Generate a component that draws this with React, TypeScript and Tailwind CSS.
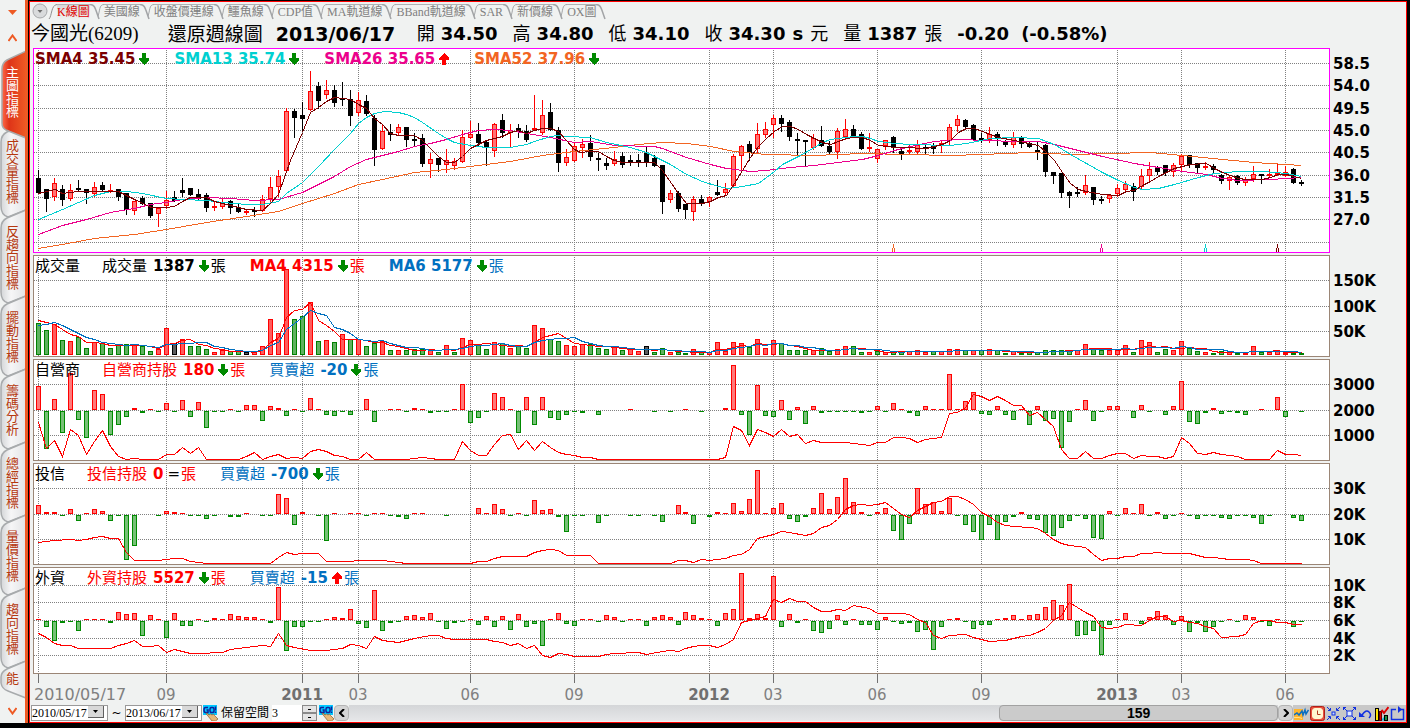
import { useState } from 'react'
import type { ReactNode } from 'react'
import clsx from 'clsx'

type Mark = 'up' | 'down' | 'flat'

const LAST = 158

const barX = (i: number) => 38 + 8 * i - (i > 80 ? 1 : 0)

const GRID_COLUMNS = [0, 16, 33, 40, 54, 67, 84, 92, 105, 118, 135, 143, 156]

const TABS = ['K線圖', '美國線', '收盤價連線', '鱷魚線', 'CDP值', 'MA軌道線', 'BBand軌道線', 'SAR', '新價線', 'OX圖']
const SIDE_TABS = ['主圖指標', '成交量指標', '反趨向指標', '擺動指標', '籌碼分析', '總經指標', '量價指標', '趨向指標']

// kind high top bottom low
const CANDLES = `
k170,178,193,193 k189,189,199,211 r178,183,197,200 k185,189,200,205 r184,190,199,200 k180,188,190,190 k189,189,193,203 r182,187,194,196
k182,185,190,190 r184,190,191,192 k189,189,197,200 k193,193,210,214 r201,201,211,214 k196,198,204,204 k203,203,216,217 r208,208,214,226
r191,200,206,208 k191,197,201,201 k178,190,193,196 k188,188,195,195 k189,194,199,199 k193,195,208,211 r202,206,208,210 r198,202,207,208
k200,201,208,213 k204,207,212,212 r209,211,212,214 k207,210,211,216 r195,199,211,211 r177,187,199,202 r170,176,187,196 r108,111,171,172
k109,111,118,137 k102,115,119,130 r71,91,110,110 k82,86,101,108 r80,90,95,98 k85,90,103,106 k82,98,99,105 k90,99,116,125
r92,100,113,115 k95,101,114,115 k115,118,150,165 r125,131,149,149 k124,132,135,140 r124,127,133,135 k127,127,140,146 k133,139,140,145
k134,138,164,166 r153,159,164,177 k158,158,165,171 r149,160,165,172 r158,161,166,169 r130,137,162,162 r121,134,138,138 k123,134,143,145
k140,142,147,165 r123,124,151,156 k114,120,133,137 r124,130,133,146 k124,128,132,137 k125,131,140,141 r95,128,129,130 r100,115,133,134
k103,112,130,130 k127,130,163,171 r149,157,163,165 r143,146,161,161 r139,144,148,157 k135,143,157,160 k153,158,159,170 k158,163,166,169
r151,159,164,165 k152,156,165,167 k155,160,163,165 k154,160,162,166 k147,153,163,166 k155,158,166,166 k165,165,202,213 r190,193,200,202
k191,193,209,211 k204,204,210,218 r196,199,212,220 k195,199,203,205 r196,197,202,206 k180,192,195,195 r183,189,193,195 r154,156,186,186
r145,146,156,170 k141,144,153,160 r123,134,149,153 r122,129,135,137 r115,118,125,137 k115,118,124,131 k120,122,137,140 k133,139,141,155
k140,140,142,165 r134,138,148,149 k126,140,146,146 k141,146,152,154 r128,131,152,158 r119,129,137,139 k125,129,137,137 k132,134,149,149
r133,147,149,151 r149,149,159,162 r140,140,146,149 k136,137,148,152 k147,151,154,159 r144,150,152,153 r140,145,152,154 k144,147,148,153
k143,146,149,153 r141,143,145,152 r124,127,141,145 r115,119,126,131 k119,120,127,128 k124,125,140,140 k133,138,140,142 r127,134,140,142
k132,134,139,145 k140,142,145,146 r132,137,145,147 k136,138,144,147 k142,143,147,147 k142,150,152,159 k144,145,172,176 k172,172,176,183
k173,173,193,197 k191,192,196,207 k187,192,193,196 r175,185,193,194 k187,187,200,204 k196,199,200,203 r195,195,199,202 r184,188,194,196
r181,184,190,192 k183,186,192,200 r169,176,187,189 r162,169,176,181 k166,167,172,174 k165,165,173,175 r163,165,172,176 r154,156,165,170
k155,155,165,167 k163,163,168,172 r162,166,167,169 k164,166,170,172 k174,175,181,183 r176,177,181,189 k175,176,183,184 r177,180,183,185
r166,174,179,181 k174,174,176,183 r169,174,176,177 r163,173,175,175 r166,172,176,176 k168,169,183,183 k180,182,184,185`
  .trim()
  .split(/\s+/)
  .map((c) => ({ kind: c[0], y: c.slice(1).split(',').map(Number) }))

const AVERAGES = [
  {
    color: '#f26522',
    points:
      '38,248 62,244 94,238 134,234 166,229 206,222 246,216 278,211 302,203 334,193 358,184 382,179 414,172 446,169 478,165 510,161 542,155 574,151 614,147 638,144 662,142 686,143 710,146 734,151 766,154 814,155 862,153 950,155 982,154 1030,152 1070,154 1110,153 1150,152 1182,155 1222,159 1254,162 1301,165',
  },
  {
    color: '#ec008c',
    points:
      '38,234 62,225 86,219 110,212 134,208 150,204 166,202 182,199 206,197 230,198 254,200 278,199 302,192 318,184 334,176 350,166 366,159 382,155 398,151 414,146 430,143 446,139 462,134 478,130 494,129 510,130 526,133 550,137 574,142 590,141 614,145 654,146 662,148 686,157 710,164 726,168 750,171 766,170 790,167 814,165 838,162 862,159 878,155 894,150 910,146 934,141 958,139 1014,141 1038,141 1054,144 1078,150 1102,156 1134,163 1158,167 1182,171 1206,174 1222,178 1238,180 1270,179 1286,178 1301,177',
  },
  {
    color: '#00d0d0',
    points:
      '38,219 62,209 78,202 94,195 110,191 126,191 142,193 166,198 182,199 206,200 222,202 246,204 262,204 278,201 286,193 302,182 318,166 334,149 350,133 358,123 366,117 374,113 384,111 398,112 406,114 414,117 422,122 438,133 446,138 454,142 470,145 486,147 510,147 526,144 534,141 550,136 558,135 566,136 590,137 606,142 630,147 646,152 662,160 670,164 686,174 702,181 718,186 728,188 742,186 758,183 766,177 774,171 782,164 798,156 814,147 822,142 830,139 854,136 862,136 870,138 878,141 894,143 910,144 950,145 966,143 990,138 1014,137 1038,138 1054,144 1070,154 1086,163 1102,172 1118,180 1134,187 1142,189 1158,188 1174,184 1198,177 1214,173 1238,171 1262,171 1286,173 1301,176',
  },
  {
    color: '#7b0000',
    points:
      '38,193 55,189 62,193 78,191 94,191 118,191 134,199 151,207 166,207 174,206 182,201 190,197 206,197 214,201 230,205 246,209 262,210 270,203 278,194 290,160 302,132 310,112 318,107 326,101 334,97 342,98 350,99 358,104 366,108 374,118 382,124 390,133 398,135 414,135 422,140 430,148 438,156 446,162 454,162 462,156 470,148 478,144 486,140 502,136 510,132 518,130 526,133 534,130 542,128 550,128 558,131 566,140 574,149 580,152 590,151 598,151 606,156 614,160 622,162 654,162 662,170 678,193 686,203 702,203 710,201 718,197 726,195 734,183 742,170 750,157 758,146 766,138 774,131 782,126 790,126 798,129 806,134 814,138 822,142 830,144 838,141 846,138 854,137 862,137 870,140 878,145 886,146 894,147 902,147 926,148 942,144 950,140 958,132 966,128 974,128 982,131 990,134 998,137 1014,140 1038,145 1046,152 1054,160 1062,172 1070,183 1078,189 1086,191 1102,194 1118,195 1126,191 1134,190 1142,185 1150,181 1158,176 1166,172 1174,168 1182,166 1190,164 1206,163 1214,168 1222,172 1230,175 1238,178 1246,179 1262,179 1270,177 1278,174 1286,174 1294,176 1301,178',
  },
]

const SIGNALS: [number, string][] = [
  [107, '#f26522'],
  [133, '#ec008c'],
  [146, '#00d0d0'],
  [155, '#7b0000'],
]

const VOLUME = `
g31 g24 r30 g14 r13 g17 g6 r12 g11 g6 g9 g10 r10 g8 g3 r5 r26 k11 r15 g8 g8 g5 r2 r4 g3 g3 k2 r2 r8 r35 r21 r85 g35 g38 r52 g13 r14 g12 r20 g15
r15 g8 g11 r13 g4 r4 g4 g5 g5 r5 g2 r9 g2 r16 r14 g9 g5 r12 g11 r6 g8 g6 r29 r26 g15 g13 r9 r8 r10 g10 g6 g5 r8 g4 r5 r3 k8 g2 g6 r2
g2 g1 r5 g2 r2 r12 r3 r12 r11 g7 r15 r6 r14 g11 g4 g4 g4 r4 g6 g3 r5 r8 g8 g2 r2 g3 r2 g3 g3 r3 r4 r2 g3 r3 r5 r5 g4 r4 g4 r5
g4 g1 r3 g1 g2 g2 g4 g4 g4 g4 r4 r10 g6 g4 r4 r4 r9 g2 r14 r12 g2 g5 r4 r13 g6 g3 r2 g1 g3 r2 g1 r1 r8 g2 r2 r4 r1 g1 g1`
  .trim()
  .split(/\s+/)
  .map((v) => ({ kind: v[0], size: Number(v.slice(1)) }))

function movingAverage(span: number) {
  const sizes = [19, 19, 30, 38, 37, ...VOLUME.map((v) => v.size)]
  return VOLUME.map((_, i) => {
    const slice = sizes.slice(i + 6 - span, i + 6)
    const mean = slice.reduce((sum, n) => sum + n, 0) / span
    return `${barX(i)},${Math.round(99 - mean)}`
  }).join(' ')
}

const DEALER_BARS = [
  24, -38, 11, -22, 37, -9, -27, 20, 16, -24, -14, -6, 2, -2, 1, -1, 7, -1, 10, -6, 8, -17, -1, -1, 1, -1, 5, 5, -10, 4, 2, -5, 1, -1, 12, 1, -4, -5, -1, -4,
  0, 11, -11, 0, 1, 1, -1, 2, 1, -2, -1, -1, 1, 26, -12, -7, -1, 17, 13, 1, -22, 13, -14, 13, -7, -9, -4, -1, -2, 0, -4, 0, 0, 0, 1, 0, 0, -1, 0, -1,
  0, 1, 0, -1, 0, 0, 2, 45, -4, -24, 25, -5, -6, 10, -9, 3, -13, 4, -2, -1, -1, -1, -1, -2, -1, 4, -1, 7, 1, -2, -5, 4, 1, 1, 36, 1, 9, 18, -3, -4,
  4, -4, -9, 1, -14, 4, -10, -8, -37, -11, 1, 10, -10, -1, 4, 4, 0, -7, 5, -1, 0, -4, 4, 29, -11, -13, -2, 2, -3, -1, -2, -4, 0, 1, 0, 13, -6, 0, -1,
]

const TRUST_BARS = [
  9, 2, 2, -1, 5, -6, 1, 5, 3, -6, -1, -45, -31, 0, 0, -1, 3, 2, 1, -1, -1, -4, -1, 0, -2, -2, 1, 0, -1, -1, 20, 16, -10, 2, 0, -1, -26, 1, 0, 1,
  1, -1, 1, 1, -1, -2, -4, 1, 1, 0, 0, -1, 0, 0, 0, 6, 1, 10, 5, -1, 1, -1, 14, 4, 5, -2, -17, -1, -1, 0, -8, -1, 0, 0, -1, -1, 0, -1, -7, 0,
  9, 2, -9, 0, -2, 2, 1, 11, 3, 15, 44, 1, 6, 11, -4, -7, -2, 6, 21, 5, 17, 36, 12, 2, -1, 2, 6, -16, -25, -9, 26, 10, 12, 3, 16, -1, -10, -17, -25, -10,
  -25, -7, -2, 2, -4, -5, -18, -21, -13, -6, -1, -4, -23, -24, 3, -1, 6, 1, 10, -1, 2, -4, -1, 1, -1, -4, -1, -1, -3, -4, -1, -1, -3, -9, -1, 0, 0, -3, -6,
]

const FOREIGN_BARS = [
  1, -6, -20, -2, -1, -10, 1, 1, 1, -2, 8, 6, 7, -15, 5, 1, -17, 7, -5, -5, 1, -1, 2, 1, 6, 4, 3, 3, 1, -2, 33, -30, -6, -6, -1, -1, 1, 3, 2, 11,
  -3, -7, 30, -10, -2, -1, 4, 5, 3, 7, -1, -8, -2, -1, 1, -4, 4, -6, 4, -9, 6, -6, -3, -25, 1, 7, -3, -5, 1, 1, -1, 5, 3, -1, 1, 1, -5, 3, 5, 3,
  -4, 8, 5, 2, 1, -5, 7, 11, 47, 2, 6, 2, 44, -6, 6, -2, 1, -10, -12, -8, 5, -4, 1, -4, -4, -9, 3, -1, -3, -2, -11, -9, -29, -6, 1, 2, -1, -8, -4, -4,
  1, 2, 5, 1, 5, 6, 13, 20, 15, 36, -15, -14, -10, -34, -4, 1, 7, 0, -3, 3, 9, 5, -4, 4, -11, -2, -11, -6, -1, 1, -1, 5, 3, -1, -5, 1, 0, -6, -1,
]

// bar index : y
const DEALER_LINE =
  '0:63 1:89 2:81 3:97 4:70 5:76 6:95 7:82 8:71 9:87 10:97 11:100 12:99 13:100 15:100 16:95 17:95 18:88 19:94 20:88 21:100 25:100 26:97 27:93 28:100 29:97 30:95 31:99 32:98 33:99 34:92 35:90 36:92 37:96 38:97 39:100 40:100 41:93 42:100 46:100 48:98 50:100 52:100 53:82 54:91 55:96 56:96 57:85 58:76 59:75 60:90 61:81 62:91 63:82 64:88 65:93 66:95 67:96 68:98 69:98 70:100 85:100 86:98 87:67 88:71 89:86 90:70 91:73 92:77 93:70 94:77 95:75 96:84 97:81 98:83 101:83 104:86 105:83 106:83 107:78 108:78 109:79 110:83 111:80 113:78 114:54 115:53 116:48 117:35 118:37 119:41 120:37 121:41 122:46 123:46 124:56 125:53 126:60 127:67 128:90 129:99 130:99 131:92 132:99 133:99 134:96 135:94 136:94 137:99 138:96 139:97 140:97 141:99 142:97 143:78 144:84 145:94 146:95 147:93 148:95 150:97 151:100 154:100 155:91 156:95 157:95 158:96'
const TRUST_LINE =
  '0:79 1:78 2:77 4:76 5:77 6:76 7:74 8:73 9:75 10:75 11:89 12:97 15:97 17:95 18:95 19:98 20:99 21:100 29:100 30:94 31:89 32:91 33:90 35:90 36:98 39:98 40:97 43:97 44:98 46:100 54:100 55:98 56:98 57:95 58:93 61:93 62:89 63:87 64:86 65:87 66:92 69:92 70:100 79:100 80:97 81:97 82:99 83:96 84:97 85:96 86:95 87:92 88:91 89:86 90:75 91:73 92:71 93:68 94:69 96:72 97:70 98:64 99:62 100:56 101:46 102:42 103:41 104:42 105:41 106:39 107:45 108:51 109:54 110:47 111:43 112:39 113:38 114:33 115:33 116:36 117:41 118:49 119:53 120:59 121:62 122:63 124:64 125:65 126:70 127:76 128:80 129:82 130:83 131:84 132:91 133:97 134:95 135:95 136:93 137:93 138:90 139:90 140:89 141:90 144:90 145:92 146:94 147:94 149:96 151:96 152:97 153:100 158:100'
const FOREIGN_LINE =
  '0:66 1:70 2:76 3:78 4:78 5:81 9:81 10:78 11:76 12:73 13:79 14:79 15:78 16:85 17:82 18:84 19:86 21:86 22:85 23:85 24:82 26:80 28:78 29:79 30:66 31:78 32:80 34:83 36:83 37:82 38:81 39:77 40:78 41:81 42:69 43:73 45:75 46:73 47:71 49:68 50:68 51:71 52:72 56:72 57:74 58:75 59:78 60:76 61:81 62:78 63:88 64:90 65:86 66:87 67:89 70:89 71:87 72:86 75:85 76:87 78:84 79:83 80:84 81:81 82:79 83:78 84:78 85:80 86:77 87:72 88:55 89:53 91:49 92:32 93:35 94:31 95:34 96:34 97:40 98:44 99:44 100:42 101:43 102:38 104:41 105:46 108:46 109:47 110:52 111:55 112:68 113:71 114:68 116:67 117:70 119:74 121:73 123:69 124:68 125:65 126:61 127:53 128:48 129:35 130:40 131:45 132:49 133:60 134:61 135:60 136:57 138:58 139:53 140:49 141:49 142:54 143:53 144:55 145:56 146:59 147:61 148:70 150:69 151:67 152:56 153:53 154:53 155:55 156:55 157:57 158:57'

const toPoints = (line: string) =>
  line
    .split(' ')
    .map((p) => p.split(':').map(Number))
    .map(([i, y]) => `${barX(i)},${y}`)
    .join(' ')

const TIME_LABELS: { i: number; text: string; bold?: boolean }[] = [
  { i: 16, text: '09' },
  { i: 33, text: '2011', bold: true },
  { i: 40, text: '03' },
  { i: 54, text: '06' },
  { i: 67, text: '09' },
  { i: 84, text: '2012', bold: true },
  { i: 92, text: '03' },
  { i: 105, text: '06' },
  { i: 118, text: '09' },
  { i: 135, text: '2013', bold: true },
  { i: 143, text: '03' },
  { i: 156, text: '06' },
]

function Arrow({ mark }: { mark: Mark }) {
  if (mark === 'flat') return <span className="ml-1 text-black">=</span>
  return (
    <svg className="ml-[3px]" width="12" height="12" viewBox="-1 0 12 12" shapeRendering="crispEdges">
      {mark === 'down' ? (
        <path d="M3 0h4v5h3v2l-5 5l-5 -5v-2h3z" fill="#008a00" />
      ) : (
        <path d="M3 12h4v-5h3v-2l-5 -5l-5 5v2h3z" fill="#ff0000" />
      )}
    </svg>
  )
}

interface LegendProps {
  name: string
  value?: string
  mark?: Mark
  unit?: string
  color: string
  bold?: boolean
}

function Legend({ name, value, mark, unit, color, bold }: LegendProps) {
  return (
    <span className={clsx('flex items-center', color)}>
      <span className={clsx(bold && 'font-bold')}>{name}</span>
      {value && <span className="ml-1.5 font-bold">{value}</span>}
      {mark && <Arrow mark={mark} />}
      {unit && <span className="ml-px">{unit}</span>}
    </span>
  )
}

interface PanelProps {
  top?: number
  height: number
  rows: number[]
  labels: [number, string][]
  title?: string
  legend: ReactNode
  children: ReactNode
  main?: boolean
}

function Panel({ top = 0, height, rows, labels, title, legend, children, main }: PanelProps) {
  return (
    <section className="flex">
      <div className={clsx('relative min-w-0 grow border bg-white', main ? 'border-[#ff00ff]' : 'border-[#9b8676]')}>
        <svg
          className="block w-full"
          height={height - 2}
          viewBox={`34 ${top + 1} 1295 ${height - 2}`}
          preserveAspectRatio="none"
          shapeRendering="crispEdges"
        >
          <g stroke="#808080" strokeDasharray="1 1">
            {rows.map((y) => (
              <line key={y} x1="34" x2="1329" y1={y + 0.5} y2={y + 0.5} />
            ))}
            {GRID_COLUMNS.map((i) => (
              <line key={i} x1={barX(i) + 0.5} x2={barX(i) + 0.5} y1={top} y2={top + height} />
            ))}
          </g>
          {children}
        </svg>
        <div className="absolute top-0 left-px flex h-5 items-center gap-6 text-[15px] leading-5 whitespace-nowrap">
          {title && <h2 className="-mr-0.5 text-black">{title}</h2>}
          {legend}
        </div>
      </div>
      <svg className="block w-[76px] shrink-0 overflow-visible" height={height} shapeRendering="auto">
        {labels.map(([y, text]) => (
          <text key={text} x="3" y={y - top + 6} className="fill-black text-[15px] font-bold">
            {text}
          </text>
        ))}
      </svg>
    </section>
  )
}

function Line({ points, color }: { points: string; color: string }) {
  return <polyline points={points} fill="none" stroke={color} strokeWidth="1" transform="translate(.5 .5)" />
}

function PricePlot() {
  return (
    <>
      {CANDLES.map(({ kind, y: [high, top, bottom, low] }, i) => {
        const x = barX(i)
        const red = kind === 'r'
        return (
          <g key={i} stroke={red ? '#ff0000' : '#000'} fill={red ? '#ff7474' : '#000'}>
            <line x1={x + 0.5} x2={x + 0.5} y1={high} y2={low + 1} />
            <rect x={x - 1.5} y={top + 0.5} width="4" height={Math.max(bottom - top - 1, 0.5)} />
          </g>
        )
      })}
      {AVERAGES.map((a) => (
        <Line key={a.color} points={a.points} color={a.color} />
      ))}
      {SIGNALS.map(([i, color]) => (
        <path key={i} d={`M${barX(i) + 0.5} 244v4M${barX(i) - 0.5} 248v4M${barX(i) + 1.5} 248v4`} stroke={color} />
      ))}
    </>
  )
}

const VOLUME_COLORS: Record<string, [string, string]> = {
  r: ['#ff5c5c', '#ff0000'],
  g: ['#5fb25f', '#008000'],
  k: ['#5c5c5c', '#000000'],
}

function VolumePlot() {
  return (
    <>
      {VOLUME.map(({ kind, size }, i) => (
        <rect
          key={i}
          x={barX(i) - 1.5}
          y={99.5 - size}
          width="4"
          height={size}
          fill={VOLUME_COLORS[kind][0]}
          stroke={VOLUME_COLORS[kind][1]}
        />
      ))}
      <Line points={movingAverage(4)} color="#ff0000" />
      <Line points={movingAverage(6)} color="#0070c0" />
    </>
  )
}

function FlowPlot({ bars, line, zero }: { bars: number[]; line: string; zero: number }) {
  return (
    <>
      {bars.slice(0, LAST + 1).map((size, i) => {
        if (size === 0) return null
        const up = size > 0
        const length = Math.abs(size)
        return (
          <rect
            key={i}
            x={barX(i) - 1.5}
            y={up ? zero - length + 0.5 : zero + 1.5}
            width="4"
            height={Math.max(length - 1, 0.1)}
            fill={up ? '#ff7a7a' : '#77c077'}
            stroke={up ? '#ff0000' : '#008a00'}
          />
        )
      })}
      <Line points={toPoints(line)} color="#ff0000" />
    </>
  )
}

function TimeAxis() {
  const percent = (px: number) => `${((px - 33) / 1297) * 100}%`
  return (
    <div className="pr-[76px]">
      <svg className="block h-[31px] w-full overflow-visible">
        <g stroke="#707070" shapeRendering="crispEdges">
          {GRID_COLUMNS.map((i) => (
            <line key={i} x1={percent(barX(i) + 0.5)} x2={percent(barX(i) + 0.5)} y1="0" y2="9" />
          ))}
        </g>
        <text x="1" y="26" className="fill-[#808080] text-base">
          2010/05/17
        </text>
        {TIME_LABELS.map(({ i, text, bold }) => (
          <text
            key={i}
            x={percent(barX(i))}
            y="26"
            textAnchor="middle"
            className={bold ? 'fill-[#707070] text-[15px] font-bold' : 'fill-[#808080] text-[15px]'}
          >
            {text}
          </text>
        ))}
      </svg>
    </div>
  )
}

function SideTab({ text, active, onClick }: { text: string; active: boolean; onClick: () => void }) {
  const h = 21 + text.length * 13
  return (
    <button
      type="button"
      onClick={onClick}
      className={clsx('relative grid w-full', active ? 'z-10 text-white' : 'text-[#b5380f]')}
    >
      <svg className="col-start-1 row-start-1 block overflow-visible" width="25" height={h} viewBox={`0 0 25 ${h}`}>
        {active ? (
          <path d={`M26 0L7 9Q2 12 2 18V${h - 1}Q2 ${h + 4} 6 ${h + 6}L26 ${h + 14}Z`} fill="url(#side-on)" stroke="#a9a9a9" strokeWidth="1.5" />
        ) : (
          <path d={`M26 0L7 8Q1 11 1 18V${h - 4}Q1 ${h + 5} 8 ${h + 7}L26 ${h}Z`} fill="url(#side-off)" stroke="#a8abad" strokeWidth="1.5" />
        )}
      </svg>
      <span className="col-start-1 row-start-1 mt-[15px] ml-1.5 w-[13px] text-[13px] leading-[13px] break-all">{text}</span>
    </button>
  )
}

function Sidebar() {
  const [active, setActive] = useState(0)
  return (
    <aside className="flex w-7 shrink-0 flex-col overflow-hidden border-r-[3px] border-[#ee5a24] bg-[#f0f2f1]">
      <svg width="0" height="0" className="block">
        <defs>
          <linearGradient id="side-on">
            <stop offset="0" stopColor="#ff6a4a" />
            <stop offset=".3" stopColor="#de3418" />
            <stop offset="1" stopColor="#ee5a24" />
          </linearGradient>
          <linearGradient id="side-off">
            <stop offset="0" stopColor="#d4d6d8" />
            <stop offset=".4" stopColor="#f6f6f7" />
            <stop offset="1" stopColor="#e2e3e5" />
          </linearGradient>
        </defs>
      </svg>
      <button type="button" aria-label="下捲" className="flex h-[25px] items-center justify-center">
        <svg width="9" height="5" viewBox="0 0 9 5">
          <path d="M0 0h9L4.500 5z" fill="#ee5a24" />
        </svg>
      </button>
      <button type="button" aria-label="上一頁" className="flex h-[26px] items-center justify-center">
        <svg width="9" height="8" viewBox="0 0 9 8" fill="none" stroke="#ee5a24" strokeWidth="2">
          <path d="M.5 7L4.500 1.500L8.500 7" />
        </svg>
      </button>
      {SIDE_TABS.map((text, i) => (
        <SideTab key={text} text={text} active={i === active} onClick={() => setActive(i)} />
      ))}
      <button type="button" className="relative grid w-full text-[#b5380f]">
        <svg className="col-start-1 row-start-1 block" width="25" height="38" viewBox="0 0 25 38">
          <path d="M26 0L7 8Q1 11 1 16V22Q2 28 8 30L26 37Z" fill="url(#side-off)" stroke="#a8abad" strokeWidth="1.5" />
        </svg>
        <span className="col-start-1 row-start-1 mt-2 ml-1.5 w-[13px] text-[13px] leading-5">能</span>
      </button>
      <button type="button" aria-label="下一頁" className="flex h-6 items-center justify-center">
        <svg width="9" height="8" viewBox="0 0 9 8" fill="none" stroke="#ee5a24" strokeWidth="2">
          <path d="M.5 1L4.500 6.500L8.500 1" />
        </svg>
      </button>
    </aside>
  )
}

function ChartTabs() {
  const [active, setActive] = useState(0)
  return (
    <nav className="flex h-[18px] items-start pl-0.5 font-['Liberation_Serif','Noto_Sans_CJK_TC',serif] text-xs">
      <button type="button" aria-label="選單" className="mt-px">
        <svg width="16" height="16" viewBox="0 0 16 16">
          <circle cx="8" cy="8" r="7" fill="#d9dbdc" stroke="#a6a8aa" />
          <path d="M5.500 7h5L8 10z" fill="#6f6f6f" />
        </svg>
      </button>
      <svg className="mt-0.5 block" width="9" height="16" viewBox="0 0 9 16" fill="none" stroke="#8e8e8e">
        <path d="M1 15C4 12 3 1 9 .5" />
      </svg>
      {TABS.map((tab, i) => (
        <button key={tab} type="button" onClick={() => setActive(i)} className="mt-0.5 flex items-start">
          <span
            className={clsx(
              'h-4 border-t border-[#b0b2b4] leading-[15px] whitespace-nowrap',
              i === active ? 'bg-gradient-to-b from-[#d8d8d8] to-[#f0f2f1] text-[#e00000]' : 'text-[#808080]',
            )}
          >
            {tab}
          </span>
          <svg className="block" width="14" height="16" viewBox="0 0 14 16" fill="none" stroke="#a2a4a6">
            <path d="M0 .5C5 .5 5 4 9 15" strokeWidth="1.5" />
            {i < TABS.length - 1 && <path d="M8 12C10 7 9 .5 14 .5" />}
          </svg>
        </button>
      ))}
    </nav>
  )
}

function Quote({ label, value }: { label: string; value: string }) {
  return (
    <span className="flex items-center gap-1.5">
      <span>{label}</span>
      <b>{value}</b>
    </span>
  )
}

function Header() {
  return (
    <header className="flex h-7 items-center gap-[15px] pl-px text-[18px] leading-7 whitespace-nowrap text-black">
      <h1 className="mr-3.5 font-['Liberation_Serif','Noto_Sans_CJK_TC',serif] text-[19px]">今國光(6209)</h1>
      <span className="-mr-0.5 text-[19px]">還原週線圖</span>
      <b className="w-[126px] text-[19px]">2013/06/17</b>
      <Quote label="開" value="34.50" />
      <Quote label="高" value="34.80" />
      <Quote label="低" value="34.10" />
      <span className="flex items-center gap-[7px]">
        <Quote label="收" value="34.30" />
        <b>s</b>
        <span>元</span>
      </span>
      <span className="flex items-center gap-[7px]">
        <Quote label="量" value="1387" />
        <span>張</span>
      </span>
      <b className="flex gap-3">
        <span>-0.20</span>
        <span>(-0.58%)</span>
      </b>
    </header>
  )
}

function DateSelect({ label, value }: { label: string; value: string }) {
  return (
    <label className="flex h-4 w-[77px] items-start border border-[#9a9a9a] bg-white">
      <select
        aria-label={label}
        defaultValue={value}
        className="h-3.5 w-14 appearance-none font-['Liberation_Serif',serif] text-xs leading-[14px] text-black"
      >
        <option>{value}</option>
      </select>
      <span className="flex h-3 w-4 items-center justify-center border-r border-b border-[#606060] bg-[#d8d8d8]">
        <svg width="5" height="3" viewBox="0 0 5 3">
          <path d="M0 0h5L2.500 3z" />
        </svg>
      </span>
    </label>
  )
}

function GoButton({ label }: { label: string }) {
  return (
    <button type="button" aria-label={label} className="relative h-4 w-4">
      <svg width="16" height="16" viewBox="0 0 16 16">
        <rect width="14" height="10" x="1" fill="#00c8ff" />
        <g fill="none" stroke="#10209a" strokeWidth="1.500">
          <path d="M6 2.500H3.500Q2 2.500 2 5T3.500 7.500H6V5H4.500" />
          <rect x="8" y="2.500" width="4" height="5" rx="1.500" />
          <path d="M13.500 1.500v4M13.500 6.500v1.500" />
        </g>
        <path d="M5 8l2 2 1.500-1 1.500 1 1.500-1 1 1.500L16 14l-2.500 2H10l-4-5-2-2.500z" fill="#e8b878" stroke="#8a5a2a" strokeWidth=".7" />
      </svg>
    </button>
  )
}

const TOOLS: { label: string; icon: ReactNode }[] = [
  {
    label: '走勢',
    icon: (
      <>
        <rect x="0" y="3" width="9" height="11" fill="#ffb52e" stroke="none" />
        <path d="M0 11.500h5l3 1" stroke="#ffe08a" />
        <path d="M0 9l3-2 2 2 3-4 1 4 2-5 1 4 2.500-4" stroke="#0a6fc0" strokeWidth="1.500" />
      </>
    ),
  },
  {
    label: '時間',
    icon: (
      <>
        <rect x=".5" y=".5" width="14" height="14" rx="2" fill="#e8503c" stroke="#b02018" />
        <rect x="2.500" y="2.500" width="10" height="10" rx="2.500" fill="#fff6d0" stroke="#fff6d0" />
        <path d="M7.500 4.500v4h3" stroke="#b03a20" />
      </>
    ),
  },
  {
    label: '縮小',
    icon: (
      <>
        <rect x="6" y="6" width="3" height="3" fill="#c8d8ff" />
        <path d="M1 1l3 3M14 1l-3 3M1 14l3-3M14 14l-3-3M2 4.500h2.500v-2.500M13 4.500h-2.500v-2.500M2 10.500h2.500v2.500M13 10.500h-2.500v2.500" />
      </>
    ),
  },
  {
    label: '放大',
    icon: (
      <>
        <rect x="5" y="5" width="5" height="5" fill="#e4ecff" />
        <path d="M1 1l4 4M14 1l-4 4M1 14l4-4M14 14l-4-4M1.500 4v-2.500h2.500M13.500 4v-2.500h-2.500M1.500 11v2.500h2.500M13.500 11v2.500h-2.500" />
      </>
    ),
  },
  {
    label: '復原',
    icon: (
      <>
        <path d="M4 9Q8 3 11 6T11 12" strokeWidth="1.500" />
        <path d="M1 6v5h6z" fill="#1030e0" stroke="none" />
      </>
    ),
  },
  {
    label: '設定圖表',
    icon: (
      <>
        <rect x="1.500" y="2.500" width="3" height="12" fill="#ffe600" stroke="#000" />
        <rect x="5.500" y="5.500" width="2" height="9" fill="#e00000" stroke="#600" />
        <path d="M8 13.500h2v-2" stroke="#18b8e8" strokeWidth="2" />
        <rect x="10.500" y="9.500" width="3" height="5" fill="#1f8f3a" stroke="#000" />
        <path d="M7.500 4l2.500 3 4.500-6" stroke="#e00000" strokeWidth="2" />
      </>
    ),
  },
  {
    label: '匯出',
    icon: (
      <>
        <path d="M6 3.500H1.500v10h12v-10H11" strokeWidth="1.500" />
        <path d="M8 0v7l4-3.500z" fill="#1030e0" stroke="none" />
      </>
    ),
  },
]

function ScrollButton({ label, d }: { label: string; d: string }) {
  return (
    <button
      type="button"
      aria-label={label}
      className="flex h-4 w-[15px] shrink-0 items-center justify-center rounded-sm border border-[#b4b4b4] bg-[#d4d4d4]"
    >
      <svg width="6" height="8" viewBox="0 0 6 8" fill="none" stroke="#000" strokeWidth="2">
        <path d={d} />
      </svg>
    </button>
  )
}

function BottomBar() {
  const [space, setSpace] = useState('3')
  return (
    <footer className="flex h-[17px] items-start pl-px text-xs text-black">
      <DateSelect label="開始日期" value="2010/05/17" />
      <span className="w-[17px] text-center leading-[17px]">~</span>
      <DateSelect label="結束日期" value="2013/06/17" />
      <GoButton label="套用日期" />
      <label className="flex items-start">
        <span className="w-[54px] pl-[3px] leading-4">保留空間</span>
        <input
          type="text"
          value={space}
          onChange={(e) => setSpace(e.target.value)}
          className="h-4 w-[30px] bg-white font-['Liberation_Serif',serif] text-xs leading-3"
        />
      </label>
      <span className="mr-px flex h-4 w-[15px] flex-col">
        <button type="button" aria-label="增加" className="flex grow items-center justify-center border border-[#8a8a8a] bg-[#e4e4e4]">
          <i className="h-px w-[3px] bg-black" />
        </button>
        <button type="button" aria-label="減少" className="flex grow items-center justify-center border border-[#8a8a8a] bg-[#e4e4e4]">
          <i className="h-px w-[3px] bg-black" />
        </button>
      </span>
      <GoButton label="套用空間" />
      <ScrollButton label="向左捲動" d="M5 0L1 4l4 4" />
      <div className="flex h-4 grow justify-end bg-gradient-to-b from-[#d4d6d8] to-[#e6e7e9]">
        <div className="flex h-4 w-3/10 items-center justify-center rounded-sm border border-[#a2a2a2] bg-[#cbcbcb] font-['Liberation_Sans',sans-serif] text-sm font-bold">
          159
        </div>
      </div>
      <ScrollButton label="向右捲動" d="M1 0l4 4l-4 4" />
      <div className="flex h-[17px] gap-px bg-[#c8c8c8] px-px">
        {TOOLS.map(({ label, icon }) => (
          <button key={label} type="button" aria-label={label}>
            <svg width="15" height="15" viewBox="0 0 15 15" fill="none" stroke="#1030e0">
              {icon}
            </svg>
          </button>
        ))}
      </div>
    </footer>
  )
}

export default function App() {
  return (
    <div className="flex bg-black pb-[5px] font-['DejaVu_Sans','Noto_Sans_CJK_TC',sans-serif]">
      <Sidebar />
      <main className="mt-px mr-[3px] ml-px min-w-0 grow border border-[#ff0000] bg-[#f0f2f1]">
        <ChartTabs />
        <Header />
        <div className="pl-[3px]">
          <div className="flex flex-col gap-0.5">
            <Panel
              main
              top={48}
              height={205}
              rows={[63, 85, 108, 130, 152, 175, 197, 219, 242]}
              labels={[
                [63, '58.5'],
                [85, '54.0'],
                [108, '49.5'],
                [130, '45.0'],
                [152, '40.5'],
                [175, '36.0'],
                [197, '31.5'],
                [219, '27.0'],
              ]}
              legend={
                <>
                  <Legend bold name="SMA4 35.45" mark="down" color="text-[#7b0000]" />
                  <Legend bold name="SMA13 35.74" mark="down" color="text-[#00d0d0]" />
                  <Legend bold name="SMA26 35.65" mark="up" color="text-[#ec008c]" />
                  <Legend bold name="SMA52 37.96" mark="down" color="text-[#f26522]" />
                </>
              }
            >
              <PricePlot />
            </Panel>
            <Panel
              height={102}
              rows={[25, 51, 76]}
              labels={[
                [25, '150K'],
                [51, '100K'],
                [76, '50K'],
              ]}
              title="成交量"
              legend={
                <>
                  <Legend name="成交量" value="1387" mark="down" unit="張" color="text-black" />
                  <Legend bold name="MA4 4315" mark="down" unit="張" color="text-[#ff0000]" />
                  <Legend bold name="MA6 5177" mark="down" unit="張" color="text-[#0070c0]" />
                </>
              }
            >
              <VolumePlot />
            </Panel>
            <Panel
              height={102}
              rows={[25, 51, 76]}
              labels={[
                [25, '3000'],
                [51, '2000'],
                [76, '1000'],
              ]}
              title="自營商"
              legend={
                <>
                  <Legend name="自營商持股" value="180" mark="down" unit="張" color="text-[#ff0000]" />
                  <Legend name="買賣超" value="-20" mark="down" unit="張" color="text-[#0070c0]" />
                </>
              }
            >
              <FlowPlot bars={DEALER_BARS} line={DEALER_LINE} zero={51} />
            </Panel>
            <Panel
              height={102}
              rows={[25, 51, 76]}
              labels={[
                [25, '30K'],
                [51, '20K'],
                [76, '10K'],
              ]}
              title="投信"
              legend={
                <>
                  <Legend name="投信持股" value="0" mark="flat" unit="張" color="text-[#ff0000]" />
                  <Legend name="買賣超" value="-700" mark="down" unit="張" color="text-[#0070c0]" />
                </>
              }
            >
              <FlowPlot bars={TRUST_BARS} line={TRUST_LINE} zero={51} />
            </Panel>
            <Panel
              height={107}
              rows={[18, 35, 53, 71, 88]}
              labels={[
                [18, '10K'],
                [35, '8K'],
                [53, '6K'],
                [71, '4K'],
                [88, '2K'],
              ]}
              title="外資"
              legend={
                <>
                  <Legend name="外資持股" value="5527" mark="down" unit="張" color="text-[#ff0000]" />
                  <Legend name="買賣超" value="-15" mark="up" unit="張" color="text-[#0070c0]" />
                </>
              }
            >
              <FlowPlot bars={FOREIGN_BARS} line={FOREIGN_LINE} zero={53} />
            </Panel>
          </div>
          <TimeAxis />
        </div>
        <BottomBar />
      </main>
    </div>
  )
}
